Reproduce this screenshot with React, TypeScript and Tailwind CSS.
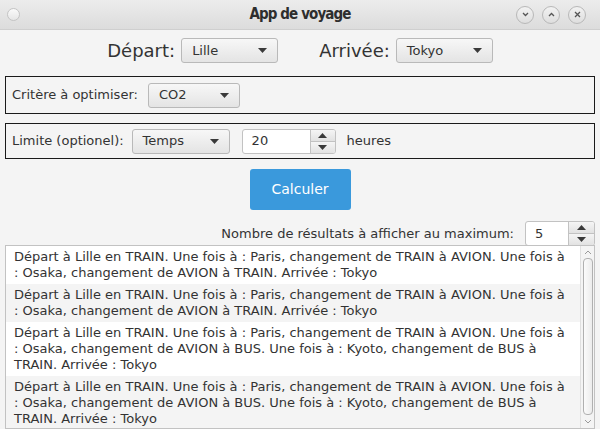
import React from 'react'

const font = { fontFamily: '"DejaVu Sans", "Liberation Sans", sans-serif' }

function Arrow() {
  return (
    <svg width="9" height="5" viewBox="0 0 9 5" className="shrink-0">
      <path d="M0 0 L9 0 L4.5 5 Z" fill="#3a3a3a" />
    </svg>
  )
}

function Combo({ value, width }: { value: string; width: string }) {
  return (
    <div
      className={`${width} h-[25px] flex items-center justify-between pl-[10px] pr-[10px] rounded-[3px] border border-[#b9b9b9] bg-gradient-to-b from-[#f7f7f7] to-[#e4e4e4] text-[13px] text-[#333]`}
    >
      <span>{value}</span>
      <Arrow />
    </div>
  )
}

function Spinner({ value, width, btn }: { value: string; width: string; btn: string }) {
  return (
    <div className={`${width} h-[25px] flex rounded-[3px] border border-[#c2c2c2] bg-white overflow-hidden`}>
      <div className="flex-1 flex items-center pl-[9px] text-[13px] text-[#333]">{value}</div>
      <div className={`${btn} flex flex-col border-l border-[#c2c2c2]`}>
        <div className="flex-1 flex items-center justify-center bg-gradient-to-b from-[#f5f5f5] to-[#e2e2e2] border-b border-[#c2c2c2]">
          <svg width="9" height="5" viewBox="0 0 9 5">
            <path d="M0 5 L9 5 L4.5 0 Z" fill="#3a3a3a" />
          </svg>
        </div>
        <div className="flex-1 flex items-center justify-center bg-gradient-to-b from-[#f5f5f5] to-[#e2e2e2]">
          <Arrow />
        </div>
      </div>
    </div>
  )
}

function WinButton({ children }: { children: React.ReactNode }) {
  return (
    <div className="w-[18px] h-[18px] rounded-full border border-[#b8b8b8] bg-gradient-to-b from-[#f2f2f2] to-[#dedede] flex items-center justify-center">
      {children}
    </div>
  )
}

const results = [
  ['Départ à Lille en TRAIN. Une fois à : Paris, changement de TRAIN à AVION. Une fois à', ': Osaka, changement de AVION à TRAIN. Arrivée : Tokyo'],
  ['Départ à Lille en TRAIN. Une fois à : Paris, changement de TRAIN à AVION. Une fois à', ': Osaka, changement de AVION à TRAIN. Arrivée : Tokyo'],
  ['Départ à Lille en TRAIN. Une fois à : Paris, changement de TRAIN à AVION. Une fois à', ': Osaka, changement de AVION à BUS. Une fois à : Kyoto, changement de BUS à', 'TRAIN. Arrivée : Tokyo'],
  ['Départ à Lille en TRAIN. Une fois à : Paris, changement de TRAIN à AVION. Une fois à', ': Osaka, changement de AVION à BUS. Une fois à : Kyoto, changement de BUS à', 'TRAIN. Arrivée : Tokyo'],
]

export default function App() {
  return (
    <div className="w-[600px] h-[429px] flex flex-col bg-[#f4f4f4] overflow-hidden text-[#333]" style={font}>
      {/* Title bar */}
      <div className="h-[30px] shrink-0 flex items-center px-[7px] bg-gradient-to-b from-[#ececec] to-[#dcdcdc] border-b border-[#cfcfcf]">
        <div className="w-[13px] h-[13px] rounded-full border border-[#c4c4c4] bg-gradient-to-b from-[#fafafa] to-[#e6e6e6]" />
        <div
          className="flex-1 text-center text-[15px] font-bold text-[#2e2e2e] pl-[64px] tracking-[-0.9px]"
          style={{ fontFamily: '"DejaVu Sans Condensed", "DejaVu Sans", sans-serif', fontStretch: 'condensed' }}
        >
          App de voyage
        </div>
        <div className="flex items-center gap-[8px] pr-[7px]">
          <WinButton>
            <svg width="7" height="5" viewBox="0 0 7 5"><path d="M1 1 L3.5 3.5 L6 1" stroke="#555" strokeWidth="1.3" fill="none" /></svg>
          </WinButton>
          <WinButton>
            <svg width="7" height="5" viewBox="0 0 7 5"><path d="M1 4 L3.5 1.5 L6 4" stroke="#555" strokeWidth="1.3" fill="none" /></svg>
          </WinButton>
          <WinButton>
            <svg width="7" height="7" viewBox="0 0 7 7"><path d="M1 1 L6 6 M6 1 L1 6" stroke="#555" strokeWidth="1.3" fill="none" /></svg>
          </WinButton>
        </div>
      </div>

      {/* Départ / Arrivée */}
      <div className="mt-[7px] flex items-center justify-center">
        <span className="text-[18px] mr-[6px]">Départ:</span>
        <Combo value="Lille" width="w-[97px]" />
        <span className="text-[18px] ml-[41px] mr-[6px]">Arrivée:</span>
        <Combo value="Tokyo" width="w-[97px]" />
      </div>

      {/* Critère */}
      <div className="mx-[5px] mt-[12px] h-[38px] border border-[#1a1a1a] flex items-center pl-[6px]">
        <span className="text-[13px] mr-[10px]">Critère à optimiser:</span>
        <Combo value="CO2" width="w-[92px]" />
      </div>

      {/* Limite */}
      <div className="mx-[5px] mt-[9px] h-[36px] border border-[#1a1a1a] flex items-center pl-[6px]">
        <span className="text-[13px] mr-[8px]">Limite (optionel):</span>
        <Combo value="Temps" width="w-[98px]" />
        <div className="ml-[12px]">
          <Spinner value="20" width="w-[94px]" btn="w-[25px]" />
        </div>
        <span className="text-[13px] ml-[11px]">heures</span>
      </div>

      {/* Calculer */}
      <div className="mt-[10px] flex justify-center">
        <div className="w-[101px] h-[41px] rounded-[3px] bg-[#3a99dc] flex items-center justify-center text-white text-[14px]">
          Calculer
        </div>
      </div>

      {/* Nombre résultats */}
      <div className="mt-[11px] flex items-center justify-end pr-[5px]">
        <span className="text-[13px] mr-[11px]">Nombre de résultats à afficher au maximum:</span>
        <Spinner value="5" width="w-[70px]" btn="w-[26px]" />
      </div>

      {/* Results list */}
      <div className="mx-[5px] -mt-[1px] flex-1 min-h-0 border border-[#c2c2c2] bg-white flex overflow-hidden">
        <div className="flex-1 flex flex-col">
          {results.map((lines, i) => (
            <div
              key={i}
              className={`pl-[8px] pr-[9px] py-[3px] text-[13px] leading-[16px] ${i % 2 === 1 ? 'bg-[#f4f4f4]' : 'bg-white'}`}
            >
              {lines.map((l, j) => (
                <div key={j} className="whitespace-nowrap">{l}</div>
              ))}
            </div>
          ))}
        </div>
        <div className="w-[14px] shrink-0 flex flex-col items-center bg-[#f4f4f4] border-l border-[#e0e0e0]">
          <svg width="8" height="5" viewBox="0 0 8 5" className="mt-[4px]">
            <path d="M1 4 L4 1 L7 4" stroke="#9a9a9a" strokeWidth="1" fill="none" />
          </svg>
          <div className="mt-[3px] w-[10px] flex-1 rounded-[4px] border border-[#b0b0b0] bg-gradient-to-r from-[#fbfbfb] to-[#ececec]" />
          <svg width="8" height="5" viewBox="0 0 8 5" className="my-[4px]">
            <path d="M1 1 L4 4 L7 1" stroke="#9a9a9a" strokeWidth="1" fill="none" />
          </svg>
        </div>
      </div>
    </div>
  )
}
